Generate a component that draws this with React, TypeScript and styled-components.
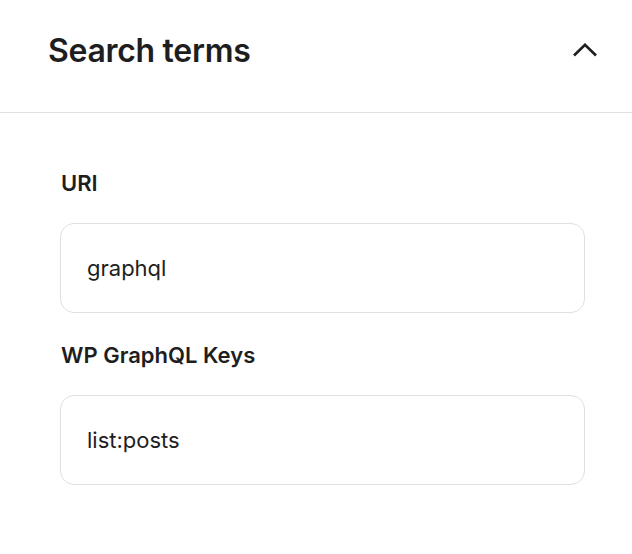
import styled, { createGlobalStyle } from "styled-components";

const GlobalStyle = createGlobalStyle`
  body {
    margin: 0;
    background: #ffffff;
    font-family: Inter, "Noto Sans", sans-serif;
    color: #1e1e1e;
  }
`;

const Panel = styled.section`
  width: 632px;
  height: 554px;
  background: #fff;
`;

const Header = styled.header`
  display: flex;
  align-items: center;
  justify-content: space-between;
  height: 113px;
  padding: 0 33px 12px 48px;
  border-bottom: 1px solid #e0e0e0;
  box-sizing: border-box;
`;

const Title = styled.h2`
  margin: 0;
  font-size: 32px;
  font-weight: 600;
  letter-spacing: -0.3px;
  color: #1e1e1e;
`;

const ToggleButton = styled.button`
  display: flex;
  align-items: center;
  justify-content: center;
  width: 28px;
  height: 28px;
  padding: 0;
  border: none;
  background: none;
  color: #1e1e1e;
  cursor: pointer;
`;

const Body = styled.div`
  display: flex;
  flex-direction: column;
  padding: 56px 47px 0 60px;
`;

const Field = styled.div`
  display: flex;
  flex-direction: column;
  gap: 26px;
  margin-bottom: 28px;
`;

const Label = styled.label`
  font-size: 22px;
  line-height: 28px;
  font-weight: 600;
  padding-left: 1px;
`;

const TextInput = styled.input`
  height: 90px;
  box-sizing: border-box;
  padding: 0 26px;
  border: 1px solid #e0e0e0;
  border-radius: 14px;
  font-family: Inter, "Noto Sans", sans-serif;
  font-size: 22px;
  color: #1e1e1e;
  background: #fff;
  outline: none;
`;

const fields = [
  { id: "uri", label: "URI", value: "graphql" },
  { id: "keys", label: "WP GraphQL Keys", value: "list:posts" },
];

export default function App() {
  return (
    <>
      <GlobalStyle />
      <Panel>
        <Header>
          <Title>Search terms</Title>
          <ToggleButton aria-label="Collapse">
            <svg width="26" height="14" viewBox="0 0 26 14" fill="none">
              <path
                d="M2 12.5L13 1.8L24 12.5"
                stroke="currentColor"
                strokeWidth="2.6"
              />
            </svg>
          </ToggleButton>
        </Header>
        <Body>
          {fields.map((f) => (
            <Field key={f.id}>
              <Label htmlFor={f.id}>{f.label}</Label>
              <TextInput id={f.id} defaultValue={f.value} />
            </Field>
          ))}
        </Body>
      </Panel>
    </>
  );
}
